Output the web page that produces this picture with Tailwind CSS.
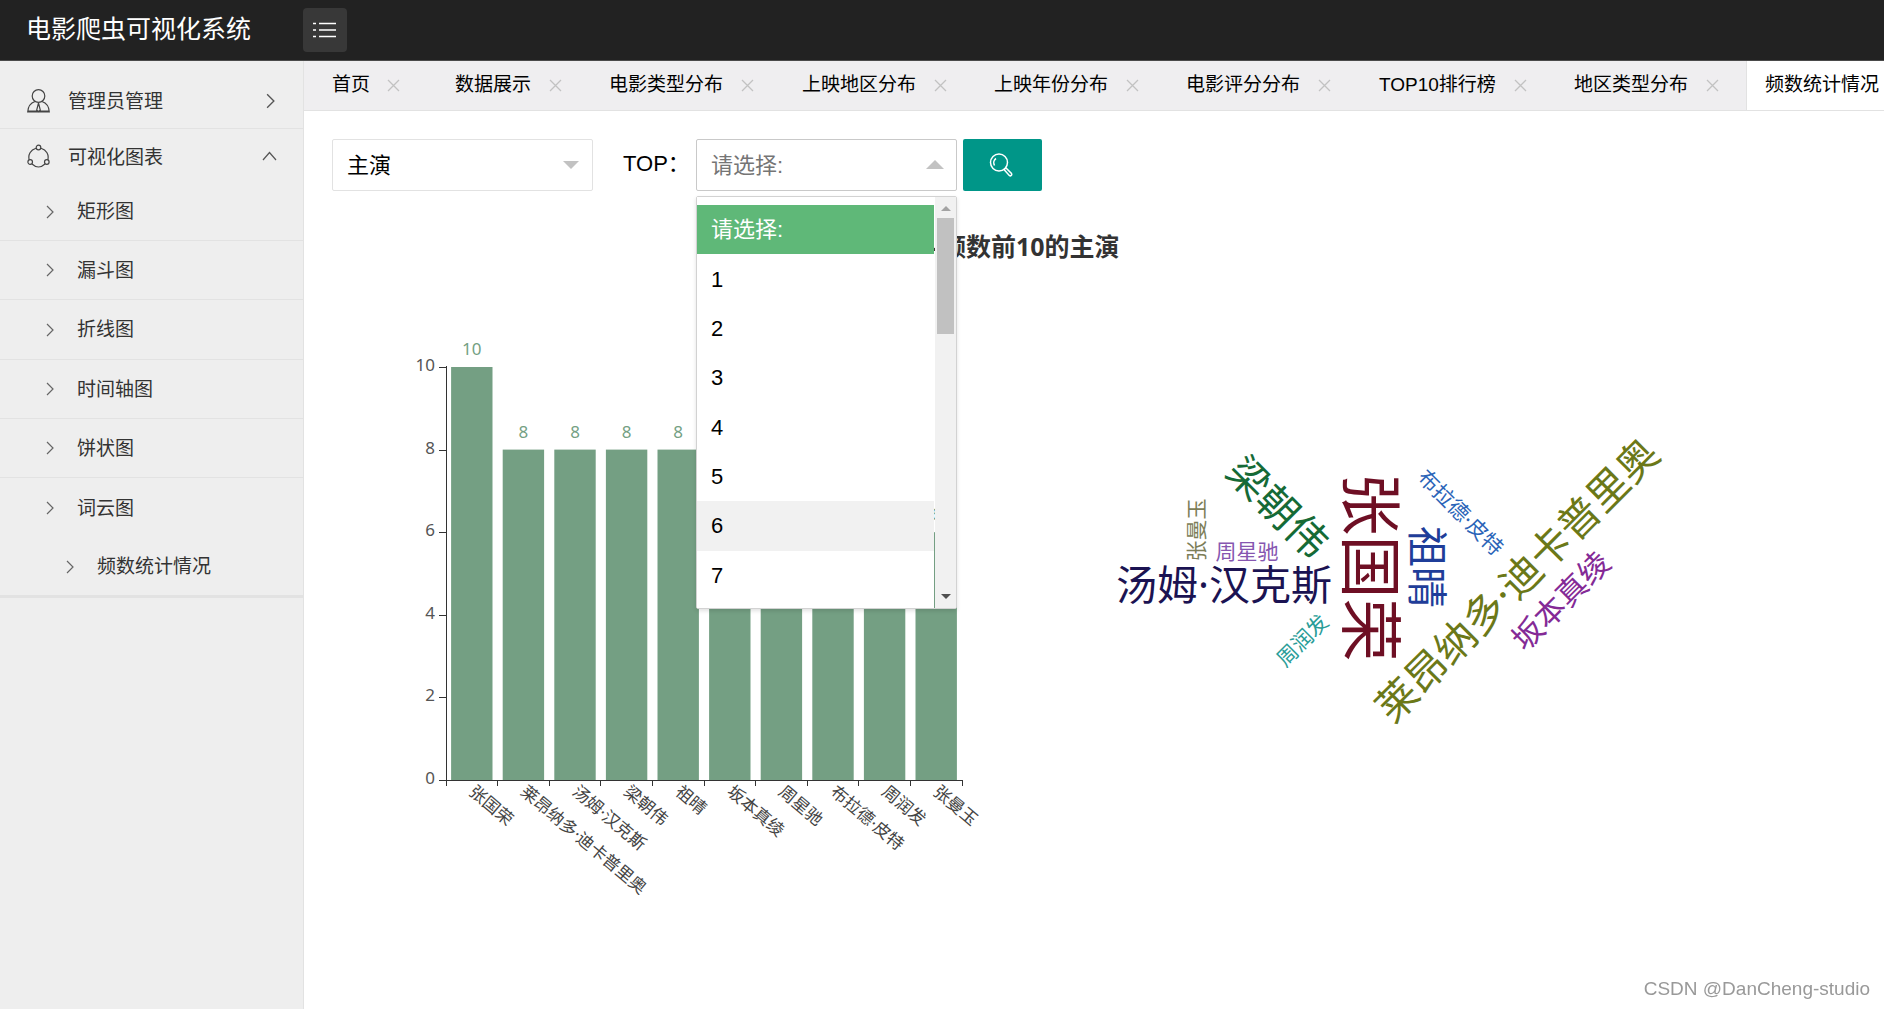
<!DOCTYPE html>
<html lang="zh-CN">
<head>
<meta charset="utf-8">
<title>电影爬虫可视化系统</title>
<script src="https://cdn.jsdelivr.net/npm/@tailwindcss/browser@4"></script>
</head>
<body class="flex min-h-screen flex-col overflow-hidden bg-white font-['Liberation_Sans','Noto_Sans_CJK_SC',sans-serif] text-[19px] text-black">
<svg class="hidden">
  <symbol id="right" viewBox="0 0 8 14"><path d="M1 1l6 6-6 6" fill="none" stroke="currentColor" stroke-width="1.2"/></symbol>
  <symbol id="close" viewBox="0 0 13 13"><path d="M1 1l11 11M12 1L1 12" fill="none" stroke="currentColor" stroke-width="1.3"/></symbol>
</svg>

<header class="flex h-[61px] shrink-0 items-start border-b border-[#4a4a4a] bg-[#222]">
  <h1 class="w-[303px] pl-[26px] pt-[11px] text-[25px] leading-9 text-white">电影爬虫可视化系统</h1>
  <button type="button" aria-label="菜单" class="mt-2 flex h-11 w-11 items-center justify-center rounded bg-[#383838] text-white">
    <svg width="24" height="16" viewBox="0 0 24 16" fill="none" stroke="currentColor" stroke-width="1.6"><path d="M0 1.5h3M6 1.5h17M0 8h3M6 8h17M0 14.5h3M6 14.5h17"/></svg>
  </button>
</header>

<div class="flex grow">
  <nav class="w-[304px] shrink-0 border-r border-[#e2e2e2] bg-[#eee] text-[#333]">
    <button type="button" class="flex h-[68px] w-full items-center border-b border-[#e2e2e2] pl-[27px] pr-7 pt-3">
      <svg class="mr-[18px]" width="23" height="24" viewBox="0 0 23 24" fill="none" stroke="#444" stroke-width="1.2"><ellipse cx="11.500" cy="7" rx="6.300" ry="6.300"/><path d="M8 12.500C3.500 14 1 17.500.7 23h21.600c-.3-5.500-2.800-9-7.300-10.500M11.500 14l-1.800 7 1.800 1.800 1.800-1.800zM1 22h21"/></svg>
      <span class="grow pt-1 text-left">管理员管理</span>
      <svg width="9" height="18" class="text-[#555]"><use href="#right"/></svg>
    </button>
    <button type="button" class="flex h-[54px] w-full items-center pl-[27px] pr-[26px]">
      <svg class="mr-[18px]" width="23" height="24" viewBox="0 0 23 24" fill="none" stroke="#444" stroke-width="1.200"><circle cx="11.500" cy="3.500" r="2.300"/><circle cx="3.200" cy="18" r="2.300"/><circle cx="19.800" cy="18" r="2.300"/><path d="M9 4.300C3.500 6 .8 10.500 2.200 15.800M14 4.300c5.500 1.700 8.200 6.200 6.800 11.500M5 20c4 3.800 9 3.800 13 0"/></svg>
      <span class="grow pt-1 text-left">可视化图表</span>
      <svg width="15" height="10" viewBox="0 0 15 10" fill="none" stroke="#555" stroke-width="1.200"><path d="M1 9l6.500-7.500L14 9"/></svg>
    </button>
    <div class="border-b-[3px] border-[#e2e2e2]">
      <a href="#" class="flex h-[58px] items-center gap-[23px] border-b border-[#e2e2e2] pl-[46px]"><svg width="8" height="14" class="text-[#666]"><use href="#right"/></svg><span class="pt-[2px]">矩形图</span></a>
      <a href="#" class="flex h-[59px] items-center gap-[23px] border-b border-[#e2e2e2] pl-[46px]"><svg width="8" height="14" class="text-[#666]"><use href="#right"/></svg><span class="pt-[2px]">漏斗图</span></a>
      <a href="#" class="flex h-[60px] items-center gap-[23px] border-b border-[#e2e2e2] pl-[46px]"><svg width="8" height="14" class="text-[#666]"><use href="#right"/></svg><span class="pt-[2px]">折线图</span></a>
      <a href="#" class="flex h-[59px] items-center gap-[23px] border-b border-[#e2e2e2] pl-[46px]"><svg width="8" height="14" class="text-[#666]"><use href="#right"/></svg><span class="pt-[2px]">时间轴图</span></a>
      <a href="#" class="flex h-[59px] items-center gap-[23px] border-b border-[#e2e2e2] pl-[46px]"><svg width="8" height="14" class="text-[#666]"><use href="#right"/></svg><span class="pt-[2px]">饼状图</span></a>
      <a href="#" class="flex h-[60px] items-center gap-[23px] pl-[46px]"><svg width="8" height="14" class="text-[#666]"><use href="#right"/></svg><span class="pt-[2px]">词云图</span></a>
      <a href="#" class="flex h-[57px] items-center gap-[23px] pl-[66px]"><svg width="8" height="14" class="text-[#666]"><use href="#right"/></svg><span class="pt-[2px]">频数统计情况</span></a>
    </div>
  </nav>

  <main class="min-w-0 grow">
    <div class="flex h-[50px] overflow-hidden border-b border-[#e2e2e2] bg-[#efeef0] pl-[9px] whitespace-nowrap">
      <div class="flex w-[123px] shrink-0 items-center gap-[17px] pl-[19px]"><a href="#">首页</a><button type="button" aria-label="关闭" class="text-[#c2c2c2]"><svg width="13" height="13"><use href="#close"/></svg></button></div>
      <div class="flex w-[154px] shrink-0 items-center gap-[18px] pl-[19px]"><a href="#">数据展示</a><button type="button" aria-label="关闭" class="text-[#c2c2c2]"><svg width="13" height="13"><use href="#close"/></svg></button></div>
      <div class="flex w-[193px] shrink-0 items-center gap-[18px] pl-[19px]"><a href="#">电影类型分布</a><button type="button" aria-label="关闭" class="text-[#c2c2c2]"><svg width="13" height="13"><use href="#close"/></svg></button></div>
      <div class="flex w-[192px] shrink-0 items-center gap-[18px] pl-[19px]"><a href="#">上映地区分布</a><button type="button" aria-label="关闭" class="text-[#c2c2c2]"><svg width="13" height="13"><use href="#close"/></svg></button></div>
      <div class="flex w-[192px] shrink-0 items-center gap-[18px] pl-[19px]"><a href="#">上映年份分布</a><button type="button" aria-label="关闭" class="text-[#c2c2c2]"><svg width="13" height="13"><use href="#close"/></svg></button></div>
      <div class="flex w-[193px] shrink-0 items-center gap-[18px] pl-[19px]"><a href="#">电影评分分布</a><button type="button" aria-label="关闭" class="text-[#c2c2c2]"><svg width="13" height="13"><use href="#close"/></svg></button></div>
      <div class="flex w-[195px] shrink-0 items-center gap-[18px] pl-[19px]"><a href="#">TOP10排行榜</a><button type="button" aria-label="关闭" class="text-[#c2c2c2]"><svg width="13" height="13"><use href="#close"/></svg></button></div>
      <div class="flex w-[191px] shrink-0 items-center gap-[18px] pl-[19px]"><a href="#">地区类型分布</a><button type="button" aria-label="关闭" class="text-[#c2c2c2]"><svg width="13" height="13"><use href="#close"/></svg></button></div>
      <div class="flex w-[193px] shrink-0 items-center border-l border-[#e2e2e2] bg-white pl-[18px]"><a href="#">频数统计情况</a></div>
    </div>

    <div class="pl-7 pt-7">
      <form class="flex h-[52px] items-center text-[22px]">
        <div class="relative w-[261px]">
          <select aria-label="统计对象" class="h-[52px] w-full appearance-none rounded-xs border border-[#e2e2e2] bg-white pl-[14px]"><option>主演</option></select>
          <svg class="pointer-events-none absolute right-[14px] top-[22px]" width="16" height="8" viewBox="0 0 16 8"><path d="M0 0h16L8 8z" fill="#c2c2c2"/></svg>
        </div>
        <label for="top" class="w-[103px] pb-1 pl-[30px]">TOP：</label>
        <div class="relative w-[261px]">
          <select id="top" class="h-[52px] w-full appearance-none rounded-xs border border-[#c9c9c9] bg-white pl-[14px] text-[#757575]"><option>请选择:</option></select>
          <svg class="pointer-events-none absolute right-[13px] top-[21px]" width="18" height="9" viewBox="0 0 18 9"><path d="M0 9h18L9 0z" fill="#c2c2c2"/></svg>
          <div class="absolute left-0 top-[57px] z-10 flex h-[413px] w-full rounded-xs border border-[#d2d2d2] shadow-[0_2px_4px_rgba(0,0,0,0.12)]">
            <ul role="listbox" aria-label="TOP" class="mr-px grow bg-white pt-2">
              <li class="h-[395px]">
                <ul class="flex h-full flex-col">
                  <li class="flex flex-1 items-center bg-[#5fb878] pl-[14px] text-white" role="option">请选择:</li>
                  <li class="flex flex-1 items-center pl-[14px]" role="option">1</li>
                  <li class="flex flex-1 items-center pl-[14px]" role="option">2</li>
                  <li class="flex flex-1 items-center pl-[14px]" role="option">3</li>
                  <li class="flex flex-1 items-center pl-[14px]" role="option">4</li>
                  <li class="flex flex-1 items-center pl-[14px]" role="option">5</li>
                  <li class="flex flex-1 items-center bg-[#f1f1f1] pl-[14px]" role="option">6</li>
                  <li class="flex flex-1 items-center pl-[14px]" role="option">7</li>
                </ul>
              </li>
            </ul>
            <div class="flex w-[21px] flex-col items-center bg-[#f1f1f1] py-[9px]">
              <svg width="10" height="5" viewBox="0 0 10 5"><path d="M0 5h10L5 0z" fill="#a3a3a3"/></svg>
              <div class="mt-[7px] h-[116px] w-[17px] bg-[#c1c1c1]"></div>
              <svg class="mt-auto" width="10" height="5" viewBox="0 0 10 5"><path d="M0 0h10L5 5z" fill="#505050"/></svg>
            </div>
          </div>
        </div>
        <button type="button" aria-label="搜索" class="ml-[6px] flex h-[52px] w-[79px] items-center justify-center rounded-xs bg-[#009688] pr-1 text-white">
          <svg width="24" height="24" viewBox="0 0 24 24" fill="none" stroke="currentColor" stroke-width="1.500"><circle cx="10" cy="9.500" r="8.500"/><path d="M5.500 12.500c-1.500-3-.5-5.800 1.500-7M15 16.500l2-1.500 5.500 5.500c.8 1.500-.8 3-2.200 2z"/></svg>
        </button>
      </form>

      <h2 class="mb-4 mt-[37px] pl-[601px] font-['Noto_Sans','Noto_Sans_CJK_SC',sans-serif] text-[25px] font-bold leading-9 text-[#333]">-频数前10的主演</h2>

      <div class="flex">
        <svg id="bars" class="shrink-0 font-['Noto_Sans','Noto_Sans_CJK_SC',sans-serif] text-[17px]" width="700" height="640" viewBox="332 280 700 640" role="img" aria-label="柱状图"></svg>
        <svg class="shrink-0 font-['Noto_Sans','Noto_Sans_CJK_SC',sans-serif]" width="700" height="640" viewBox="1032 280 700 640" text-anchor="middle" role="img" aria-label="词云图">
          <text transform="translate(1371 567) rotate(90)" y="23" font-size="63" fill="#6e0f24">张国荣</text>
          <text transform="translate(1224 585)" y="15" font-size="41" fill="#1b1352">汤姆·汉克斯</text>
          <text transform="translate(1278 507) rotate(45)" y="15" font-size="41" fill="#156a36">梁朝伟</text>
          <text transform="translate(1427 567) rotate(90)" y="15" font-size="41" fill="#1f3d99">祖晴</text>
          <text transform="translate(1517 580) rotate(-45)" y="15" font-size="41" fill="#6b7818">莱昂纳多·迪卡普里奥</text>
          <text transform="translate(1561 601) rotate(-45)" y="11" font-size="31" fill="#842a96">坂本真绫</text>
          <text transform="translate(1461 512) rotate(45)" y="8" font-size="21" fill="#2a64b8">布拉德·皮特</text>
          <text transform="translate(1247 551)" y="8" font-size="21" fill="#8656b0">周星驰</text>
          <text transform="translate(1302 640) rotate(-45)" y="8" font-size="21" fill="#2a9d98">周润发</text>
          <text transform="translate(1196 530) rotate(-90)" y="8" font-size="21" fill="#7d7e58">张曼玉</text>
        </svg>
      </div>
    </div>
  </main>
</div>

<div class="fixed bottom-2 right-[14px] text-[19px] leading-6 text-[#999]">CSDN @DanCheng-studio</div>

<script>
  const data = [['张国荣',10],['莱昂纳多·迪卡普里奥',8],['汤姆·汉克斯',8],['梁朝伟',8],['祖晴',8],['坂本真绫',7],['周星驰',6],['布拉德·皮特',6],['周润发',6],['张曼玉',6]];
  const left = 446, bottom = 780, band = 51.6, unit = 41.3;
  let out = '';
  data.forEach(([name, value], i) => {
    const c = left + band * (i + 0.5), top = bottom - unit * value;
    out += `<rect x="${c - 20.7}" y="${top}" width="41.4" height="${unit * value}" fill="#749f83"/>`
      + `<text x="${c}" y="${top - 12}" text-anchor="middle" fill="#749f83">${value}</text>`
      + `<text transform="translate(${c} 789) rotate(40)" y="6" fill="#444">${name}</text>`;
  });
  for (let v = 0; v <= 10; v += 2) {
    const y = Math.round(bottom - unit * v) + 0.5;
    out += `<path d="M439 ${y}h8" stroke="#333"/><text x="435" y="${y + 3}" text-anchor="end" fill="#555">${v}</text>`;
  }
  for (let i = 0; i <= 10; i++) {
    out += `<path d="M${Math.floor(left + band * i) + 0.5} 780v6" stroke="#333"/>`;
  }
  out += '<path d="M446.5 366V780.5H963" fill="none" stroke="#333"/>';
  document.getElementById('bars').innerHTML = out;
</script>
</body>
</html>
